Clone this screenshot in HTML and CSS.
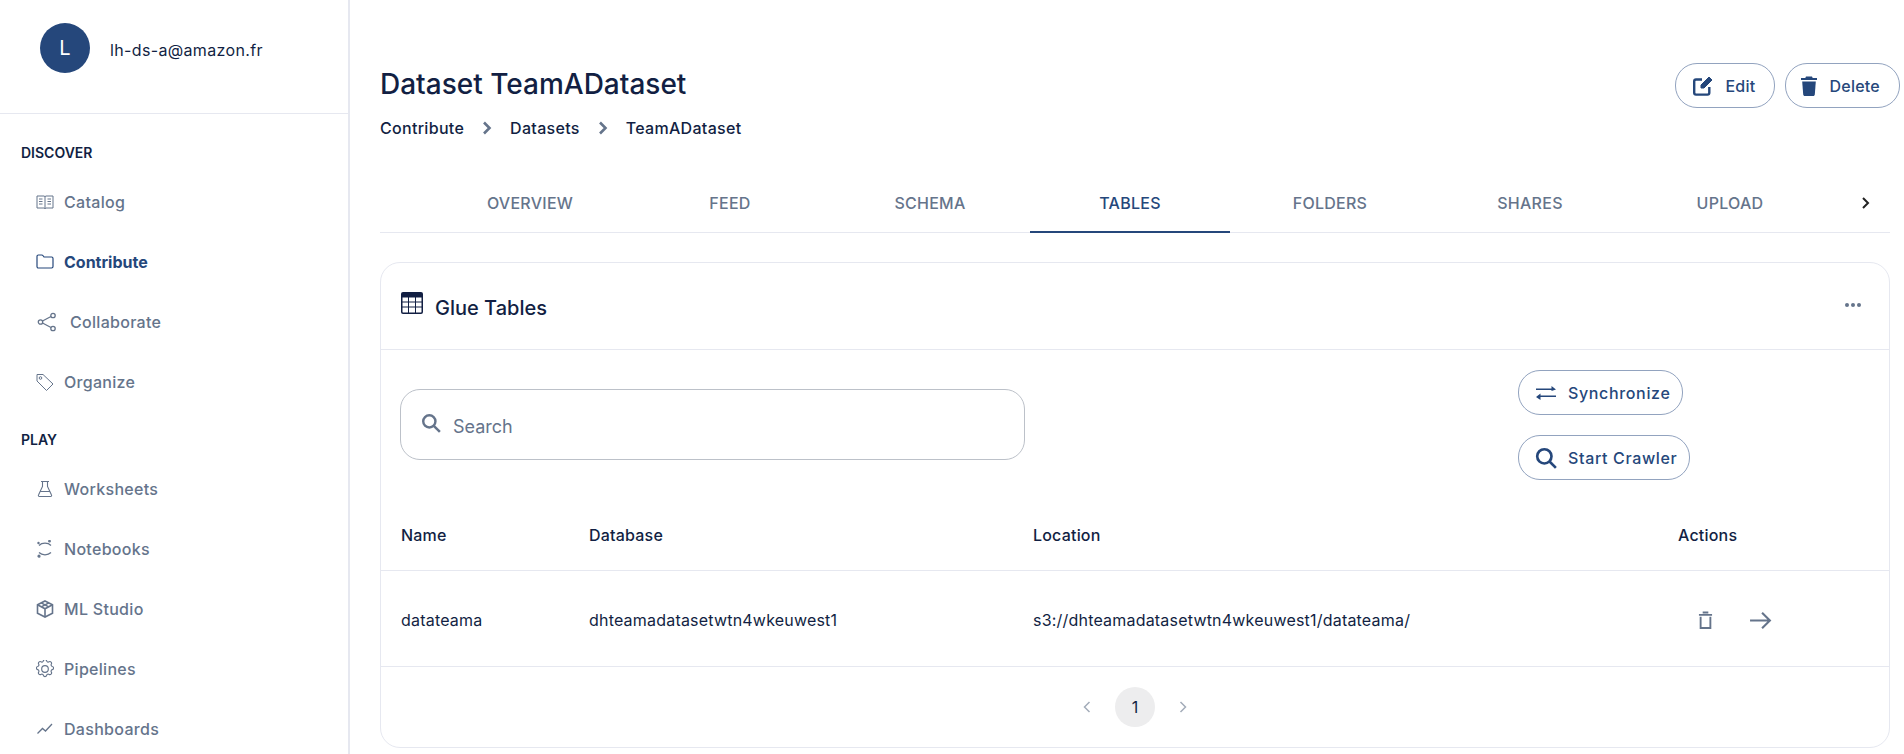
FILE: index.html
```html
<!DOCTYPE html>
<html lang="en">
<head>
    <meta charset="UTF-8">
    <meta name="viewport" content="width=device-width, initial-scale=1.0">
    <title>Dataset TeamADataset</title>
    <link rel="stylesheet" href="styles.css">
</head>
<body>
    <aside class="sidebar">
        <div class="user-box">
            <div class="avatar">L</div>
            <div class="user-mail">lh-ds-a@amazon.fr</div>
        </div>
        <nav class="side-nav">
            <div class="nav-title">DISCOVER</div>
            <a class="nav-item" href="#">
                <svg class="nav-icon" viewBox="0 0 18 18" fill="none" stroke="currentColor" stroke-width="1"><path d="M1 3h7l1 .6L10 3h7v12h-7l-1 .6L8 15H1z"/><path d="M9 3.6v12M3 6h3.5M3 8.500h3.500M3 11h3.500M11.500 6H15M11.500 8.500H15M11.500 11H15"/></svg>
                <span>Catalog</span>
            </a>
            <a class="nav-item active" href="#">
                <svg class="nav-icon" viewBox="0 0 18 18" fill="none" stroke="currentColor" stroke-width="1.2"><path d="M1 5V3.500C1 2.700 1.600 2 2.400 2h3.200c.8 0 1.200.3 1.700 1l.7 1h7.600c.9 0 1.400.6 1.400 1.400v8.200c0 .8-.6 1.400-1.400 1.400H2.400C1.600 15 1 14.400 1 13.600z"/></svg>
                <span>Contribute</span>
            </a>
            <a class="nav-item wide" href="#">
                <svg class="nav-icon" viewBox="0 0 20 20" fill="none" stroke="currentColor" stroke-width="1.300"><circle cx="16" cy="3.500" r="2.200"/><circle cx="16" cy="16.500" r="2.200"/><circle cx="3.500" cy="10" r="2.200"/><path d="M5.500 9l8.500-4.500M5.500 11l8.500 4.500"/></svg>
                <span>Collaborate</span>
            </a>
            <a class="nav-item" href="#">
                <svg class="nav-icon" viewBox="0 0 18 18" fill="none" stroke="currentColor" stroke-width="1"><path d="M1 1.500h6l10 9.500-6.500 6.500L1 8z"/><circle cx="4.500" cy="5" r="1.300"/></svg>
                <span>Organize</span>
            </a>
            <div class="nav-title second">PLAY</div>
            <a class="nav-item" href="#">
                <svg class="nav-icon" viewBox="0 0 18 18" fill="none" stroke="currentColor" stroke-width="1.100"><path d="M5 1.500h8M6.500 1.500v5L2.500 15c-.4.800.1 1.500.9 1.500h11.200c.8 0 1.300-.7.900-1.500l-4-8.500v-5M4.500 11.500h9"/></svg>
                <span>Worksheets</span>
            </a>
            <a class="nav-item" href="#">
                <svg class="nav-icon" viewBox="0 0 18 18" fill="none" stroke="currentColor" stroke-width="1.200"><path d="M3 5.500C4.500 4 6.800 3.200 9 3.200s4.500.8 6 2.300M3 12.500c1.500 1.500 3.800 2.300 6 2.300s4.500-.8 6-2.300"/><circle cx="13.500" cy="1.200" r=".8" fill="currentColor"/><circle cx="2.500" cy="3" r=".6" fill="currentColor"/><circle cx="3" cy="16.200" r="1" fill="currentColor"/></svg>
                <span>Notebooks</span>
            </a>
            <a class="nav-item" href="#">
                <svg class="nav-icon" viewBox="0 0 18 18" fill="none" stroke="currentColor" stroke-width="1.600"><path d="M9 1l7.500 3.800v8.400L9 17l-7.500-3.800V4.800z"/><path d="M1.500 4.800L9 8.800l7.500-4M9 8.800V17M5.200 2.900l7.500 4M12.800 2.900l-7.500 4"/></svg>
                <span>ML Studio</span>
            </a>
            <a class="nav-item" href="#">
                <svg class="nav-icon" viewBox="2.500 2.500 19 19" fill="none" stroke="currentColor" stroke-width="1.200"><path d="M10.300 3.300c.4-1.800 3-1.800 3.400 0a1.700 1.700 0 0 0 2.600 1.100c1.500-.9 3.300.8 2.400 2.400a1.700 1.700 0 0 0 1 2.500c1.800.4 1.800 3 0 3.400a1.700 1.700 0 0 0-1 2.600c.9 1.500-.9 3.300-2.400 2.400a1.700 1.700 0 0 0-2.600 1c-.4 1.800-3 1.800-3.400 0a1.700 1.700 0 0 0-2.600-1c-1.500.9-3.300-.9-2.400-2.400a1.700 1.700 0 0 0-1-2.600c-1.800-.4-1.800-3 0-3.400a1.700 1.700 0 0 0 1-2.500c-.9-1.600.9-3.300 2.400-2.400a1.700 1.700 0 0 0 2.600-1.100z"/><circle cx="12" cy="12" r="3.500"/></svg>
                <span>Pipelines</span>
            </a>
            <a class="nav-item" href="#">
                <svg class="nav-icon" viewBox="0 0 18 18" fill="none" stroke="currentColor" stroke-width="1.300"><path d="M1.500 13.500l5-5 3 2.500 6.500-7"/></svg>
                <span>Dashboards</span>
            </a>
        </nav>
    </aside>

    <main class="content">
        <div class="page-head">
            <div>
                <h1>Dataset TeamADataset</h1>
                <div class="crumbs">
                    <span>Contribute</span>
                    <svg class="crumb-sep" viewBox="0 0 12 14" fill="none" stroke="currentColor" stroke-width="2.600"><path d="M3 1.500L8.500 7 3 12.500"/></svg>
                    <span>Datasets</span>
                    <svg class="crumb-sep" viewBox="0 0 12 14" fill="none" stroke="currentColor" stroke-width="2.600"><path d="M3 1.500L8.500 7 3 12.500"/></svg>
                    <span>TeamADataset</span>
                </div>
            </div>
            <div class="head-actions">
                <button class="btn">
                    <svg class="btn-icon" viewBox="0 0 22 22" fill="none" stroke="currentColor" stroke-width="2.400"><path d="M10 4.500H4c-1 0-1.800.8-1.800 1.800v11.500c0 1 .8 1.800 1.800 1.800h11.500c1 0 1.800-.8 1.800-1.800V12"/><path d="M9 10L17 2l3 3-8 8H9z" fill="currentColor" stroke-width="1"/></svg>
                    Edit
                </button>
                <button class="btn btn-delete">
                    <svg class="btn-icon" viewBox="0 0 18 22" fill="currentColor"><path d="M6 1.500h6l.7 1.500H17v2H1V3h4.300z"/><path d="M2.200 6.500h13.600l-1 13c-.1.900-.7 1.500-1.600 1.500H4.800c-.9 0-1.500-.6-1.600-1.500z"/></svg>
                    Delete
                </button>
            </div>
        </div>

        <div class="tabs">
            <a class="tab" href="#">OVERVIEW</a>
            <a class="tab" href="#">FEED</a>
            <a class="tab" href="#">SCHEMA</a>
            <a class="tab active" href="#">TABLES</a>
            <a class="tab" href="#">FOLDERS</a>
            <a class="tab" href="#">SHARES</a>
            <a class="tab" href="#">UPLOAD</a>
            <div class="tab-next">
                <svg viewBox="0 0 12 14" width="12" height="14" fill="none" stroke="currentColor" stroke-width="2"><path d="M3 2l5 5-5 5"/></svg>
            </div>
        </div>

        <section class="card">
            <div class="card-head">
                <div class="card-title">
                    <svg class="card-icon" viewBox="0 0 22 22"><rect x="0" y="0" width="22" height="22" rx="2" fill="currentColor"/><path fill="#fff" d="M1.500 5.500h5.500v4H1.500zM8 5.500h6v4H8zM15 5.500h5.500v4H15zM1.500 10.500h5.500v4H1.500zM8 10.500h6v4H8zM15 10.500h5.500v4H15zM1.500 15.500h5.500v5H2c-.3 0-.5-.2-.5-.5zM8 15.500h6v5H8zM15 15.500h5.500V20c0 .3-.2.500-.5.500h-5z"/></svg>
                    <span>Glue Tables</span>
                </div>
                <div class="dots"><i></i><i></i><i></i></div>
            </div>

            <div class="toolbar">
                <div class="search-box">
                    <svg class="search-icon" viewBox="0 0 18 18" fill="none" stroke="currentColor" stroke-width="2.200"><circle cx="7.500" cy="7.500" r="5.500"/><path d="M11.500 11.500L17 17"/></svg>
                    <span>Search</span>
                </div>
                <div class="toolbar-btns">
                    <button class="btn small">
                        <svg class="btn-icon" viewBox="0 0 22 18" fill="currentColor"><path d="M1 4.500h15.500V2l4.500 3.500L16.500 7V6H1zM21 11.500v1.500H5.500v3L1 13l4.500-3.500v2z"/></svg>
                        Synchronize
                    </button>
                    <button class="btn small">
                        <svg class="btn-icon" viewBox="0 0 20 20" fill="none" stroke="currentColor" stroke-width="2.400"><circle cx="8.500" cy="8.500" r="6.500"/><path d="M13 13l6 6"/></svg>
                        Start Crawler
                    </button>
                </div>
            </div>

            <table class="grid">
                <thead>
                    <tr>
                        <th class="col-name">Name</th>
                        <th class="col-db">Database</th>
                        <th class="col-loc">Location</th>
                        <th>Actions</th>
                    </tr>
                </thead>
                <tbody>
                    <tr>
                        <td>datateama</td>
                        <td>dhteamadatasetwtn4wkeuwest1</td>
                        <td>s3://dhteamadatasetwtn4wkeuwest1/datateama/</td>
                        <td>
                            <div class="row-actions">
                                <svg class="trash" viewBox="0 0 16 20" fill="none" stroke="currentColor" stroke-width="2"><path d="M1 4h14M5 1.500h6M2.800 6v12h10.400V6"/></svg>
                                <svg class="arrow" viewBox="0 0 22 18" fill="none" stroke="currentColor" stroke-width="2"><path d="M1 9h19M12.500 1.500L20 9l-7.500 7.500"/></svg>
                            </div>
                        </td>
                    </tr>
                </tbody>
            </table>

            <div class="pager">
                <svg class="pager-arrow" viewBox="0 0 12 14" fill="none" stroke="currentColor" stroke-width="1.500"><path d="M8.500 2L3.500 7l5 5"/></svg>
                <div class="page-num">1</div>
                <svg class="pager-arrow" viewBox="0 0 12 14" fill="none" stroke="currentColor" stroke-width="1.500"><path d="M3.500 2l5 5-5 5"/></svg>
            </div>
        </section>
    </main>
</body>
</html>
```

FILE: styles.css
```css
* {
    box-sizing: border-box;
}

body {
    font-family: Inter, "Liberation Sans", sans-serif;
    margin: 0;
    height: 100vh;
    overflow: hidden;
    display: flex;
    background-color: #ffffff;
    color: #121f43;
    font-size: 16px;
}

a {
    text-decoration: none;
    color: inherit;
}

/* Sidebar */
.sidebar {
    width: 350px;
    flex-shrink: 0;
    border-right: 2px solid #e6e8f0;
}

.user-box {
    height: 114px;
    padding: 23px 0 0 40px;
    display: flex;
    gap: 20px;
    border-bottom: 1px solid #e6e8f0;
}

.avatar {
    width: 50px;
    height: 50px;
    border-radius: 50%;
    background: #25477b;
    color: #ffffff;
    font-size: 20px;
    display: flex;
    justify-content: center;
    align-items: center;
}

.user-mail {
    font-size: 16px;
    letter-spacing: 0.35px;
    line-height: 54px;
    height: 54px;
}

.side-nav {
    padding: 29px 0 0 21px;
}

.nav-title {
    font-size: 14px;
    font-weight: 600;
    line-height: 20px;
}

.nav-title.second {
    margin-top: 18px;
}

.nav-item {
    display: flex;
    align-items: center;
    gap: 10px;
    height: 60px;
    padding-left: 15px;
    color: #65748b;
    font-size: 16px;
    font-weight: 500;
    letter-spacing: 0.3px;
}

.nav-title + .nav-item {
    margin-top: 9px;
}

.nav-item.active {
    color: #25477b;
    font-weight: 700;
    letter-spacing: 0;
}

.nav-item.wide {
    gap: 13px;
    padding-left: 16px;
}

.nav-item.wide .nav-icon {
    width: 20px;
    height: 20px;
}

.nav-icon {
    width: 18px;
    height: 18px;
    flex-shrink: 0;
}

/* Main */
.content {
    flex-grow: 1;
    min-width: 0;
    padding: 63px 4px 0 30px;
}

.page-head {
    display: flex;
    justify-content: space-between;
    align-items: flex-start;
    height: 128px;
}

.page-head h1 {
    margin: 0;
    font-size: 28px;
    font-weight: 500;
    line-height: 42px;
}

.crumbs {
    display: flex;
    align-items: center;
    gap: 17px;
    margin-top: 11px;
    font-size: 16px;
    font-weight: 500;
    letter-spacing: 0.3px;
    line-height: 24px;
}

.crumb-sep {
    width: 12px;
    height: 14px;
    color: #65748b;
}

.head-actions {
    display: flex;
    gap: 10px;
}

.btn {
    display: inline-flex;
    align-items: center;
    gap: 11px;
    height: 45px;
    padding: 0 19px 0 16px;
    background: #ffffff;
    border: 1px solid #92a3bf;
    border-radius: 22px;
    color: #25477b;
    font-family: inherit;
    font-size: 16px;
    font-weight: 500;
    letter-spacing: 0.25px;
}

.btn-icon {
    width: 22px;
    height: 22px;
    flex-shrink: 0;
}

.btn-delete {
    padding-left: 14px;
}

.btn-delete .btn-icon {
    width: 18px;
}

/* Tabs */
.tabs {
    display: flex;
    margin: 0 10px 0 0;
    padding-left: 50px;
    border-bottom: 1px solid #e6e8f0;
    height: 42px;
}

.tab {
    width: 200px;
    height: 42px;
    text-align: center;
    font-size: 16px;
    font-weight: 500;
    letter-spacing: 0.25px;
    line-height: 24px;
    color: #65748b;
}

.tab.active {
    color: #25477b;
    border-bottom: 2px solid #25477b;
}

.tab-next {
    flex-grow: 1;
    padding: 3px 0 0 30px;
    color: #222222;
}

/* Card */
.card {
    margin: 29px 10px 0 0;
    height: 486px;
    border: 1px solid #e6e8f0;
    border-radius: 20px;
}

.card-head {
    height: 87px;
    display: flex;
    justify-content: space-between;
    align-items: center;
    padding: 0 28px 0 20px;
    border-bottom: 1px solid #e6e8f0;
}

.card-title {
    display: flex;
    align-items: center;
    gap: 12px;
    font-size: 20px;
    font-weight: 500;
}

.card-title span {
    padding-top: 4px;
}

.card-icon {
    width: 22px;
    height: 22px;
    margin-top: -6px;
}

.dots {
    display: flex;
    gap: 2px;
    margin-top: -2px;
}

.dots i {
    width: 4px;
    height: 4px;
    border-radius: 50%;
    background: #65748b;
}

.toolbar {
    display: flex;
    justify-content: space-between;
    height: 150px;
    padding: 20px 0 0 19px;
}

.search-box {
    width: 625px;
    height: 71px;
    margin-top: 19px;
    display: flex;
    align-items: center;
    gap: 12px;
    padding-left: 20px;
    border: 1px solid #bcc1c9;
    border-radius: 20px;
    color: #65748b;
    font-size: 18px;
}

.search-box span {
    padding-top: 4px;
}

.search-icon {
    width: 20px;
    height: 20px;
    margin-top: -4px;
}

.toolbar-btns {
    width: 371px;
    display: flex;
    flex-direction: column;
    align-items: flex-start;
    gap: 20px;
}

.btn.small {
    padding: 0 12px 0 16px;
    letter-spacing: 0.65px;
}

.grid {
    width: 100%;
    border-collapse: collapse;
    table-layout: fixed;
}

.grid th {
    height: 70px;
    padding: 0;
    text-align: left;
    font-size: 16px;
    font-weight: 500;
    letter-spacing: 0.2px;
    vertical-align: middle;
}

.grid th:first-child,
.grid td:first-child {
    padding-left: 20px;
}

.col-name {
    width: 208px;
}

.col-db {
    width: 444px;
}

.col-loc {
    width: 645px;
}

.grid thead tr {
    border-bottom: 1px solid #e6e8f0;
}

.grid tbody tr {
    border-bottom: 1px solid #e6e8f0;
}

.grid td {
    height: 96px;
    padding: 4px 0 0;
    font-size: 16px;
    letter-spacing: 0.2px;
    color: #121f43;
}

.row-actions {
    display: flex;
    align-items: center;
    gap: 36px;
    padding-left: 20px;
    color: #65748b;
}

.trash {
    width: 15px;
    height: 19px;
}

.arrow {
    width: 23px;
    height: 19px;
}

.pager {
    display: flex;
    justify-content: center;
    align-items: center;
    gap: 22px;
    height: 80px;
    color: #a3acb9;
}

.pager-arrow {
    width: 12px;
    height: 14px;
}

.page-num {
    width: 40px;
    height: 40px;
    border-radius: 50%;
    background: #ededee;
    color: #121f43;
    font-size: 16px;
    display: flex;
    justify-content: center;
    align-items: center;
}
```
